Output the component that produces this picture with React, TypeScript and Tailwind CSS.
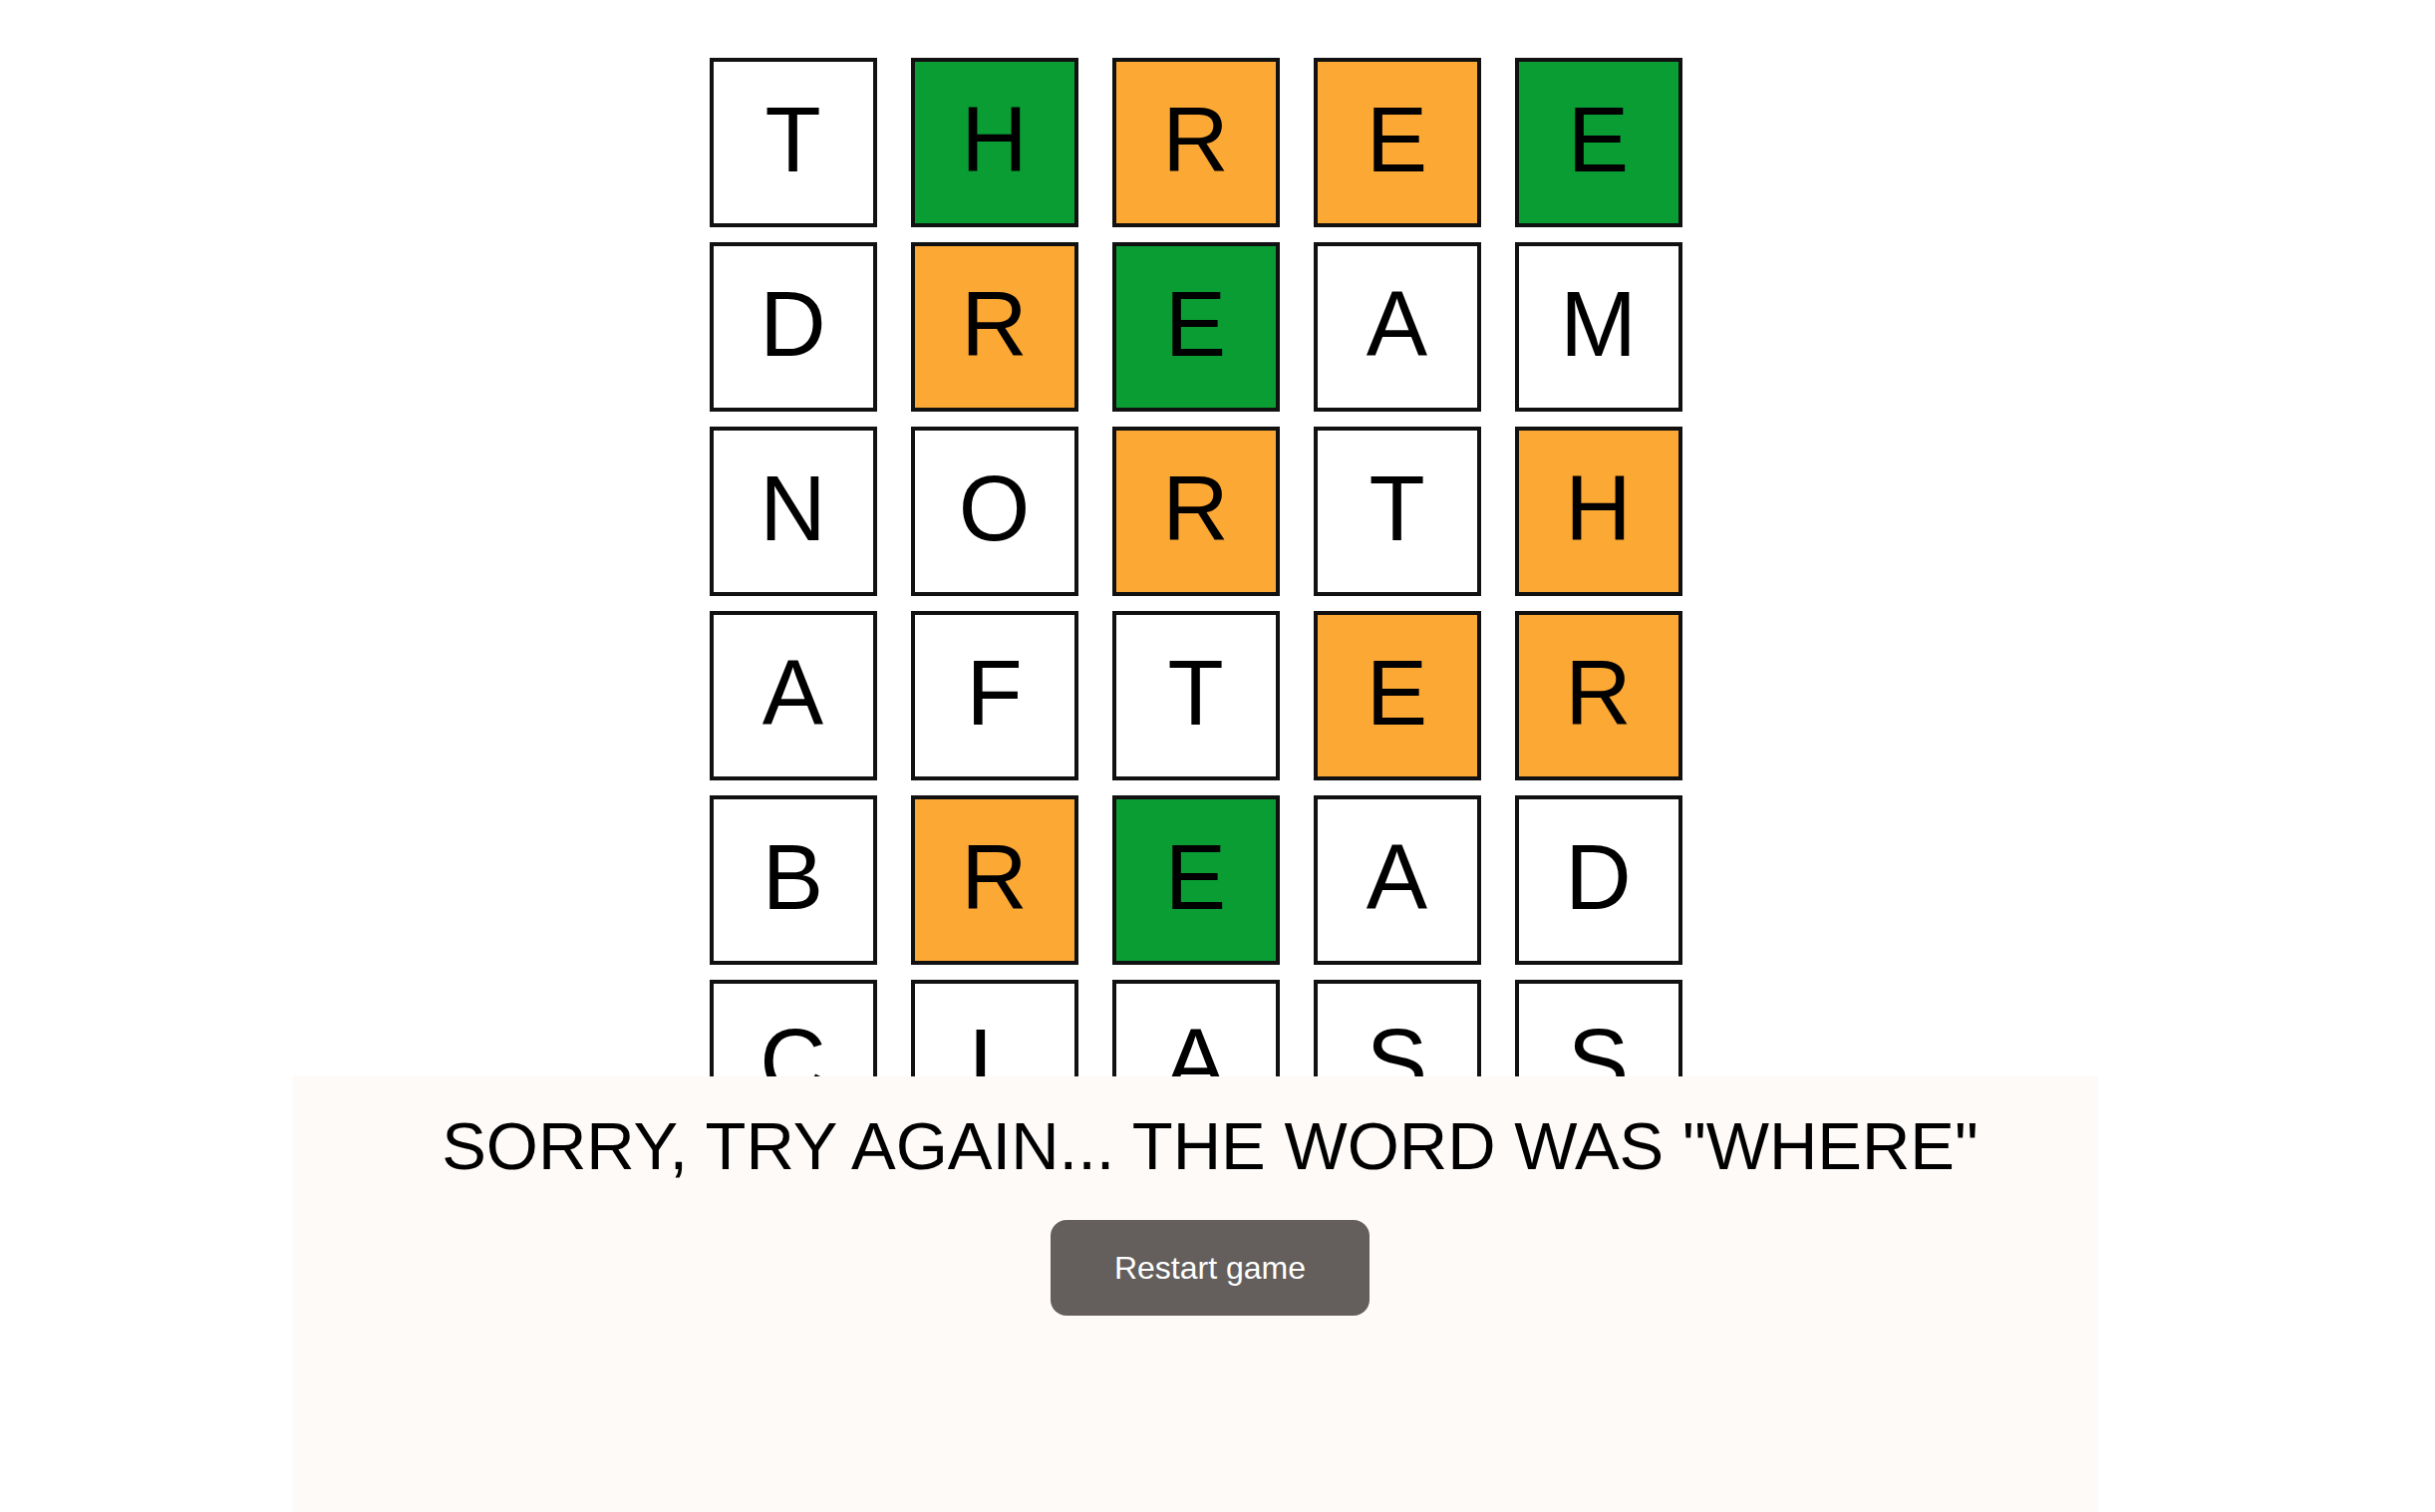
import React from 'react';

type Mark = 'hit' | 'near' | 'miss';

const guesses: { word: string; marks: Mark[] }[] = [
  { word: 'THREE', marks: ['miss', 'hit', 'near', 'near', 'hit'] },
  { word: 'DREAM', marks: ['miss', 'near', 'hit', 'miss', 'miss'] },
  { word: 'NORTH', marks: ['miss', 'miss', 'near', 'miss', 'near'] },
  { word: 'AFTER', marks: ['miss', 'miss', 'miss', 'near', 'near'] },
  { word: 'BREAD', marks: ['miss', 'near', 'hit', 'miss', 'miss'] },
  { word: 'CLASS', marks: ['miss', 'miss', 'miss', 'miss', 'miss'] },
];

const tileColor: Record<Mark, string> = {
  hit: 'bg-[#099d34]',
  near: 'bg-[#fca834]',
  miss: 'bg-white',
};

function Tile({ letter, mark }: { letter: string; mark: Mark }) {
  return (
    <div
      className={`w-[168px] h-[170px] border-4 border-[#111] flex items-center justify-center pb-[6px] text-[92px] text-black ${tileColor[mark]}`}
    >
      {letter}
    </div>
  );
}

export default function App() {
  return (
    <div
      className="relative min-h-screen bg-white pr-[44px]"
      style={{ fontFamily: '"Liberation Sans", Arial, sans-serif' }}
    >
      <div className="flex justify-center pt-[58px]">
        <div className="grid grid-cols-5 gap-x-[34px] gap-y-[15px]">
          {guesses.map((g, r) =>
            g.word
              .split('')
              .map((ch, c) => <Tile key={`${r}-${c}`} letter={ch} mark={g.marks[c]} />)
          )}
        </div>
      </div>

      {/* end-of-game panel pinned to the bottom */}
      <div className="fixed inset-x-0 bottom-0 pr-[44px] flex justify-center">
        <div className="w-[1811px] h-[437px] bg-[#fdfaf8] flex flex-col items-center pt-[20px] pl-[29px]">
          <h2 className="text-[67px] leading-normal text-black">
            SORRY, TRY AGAIN... THE WORD WAS "WHERE"
          </h2>
          <button className="mt-[23px] w-[320px] h-[96px] rounded-[16px] bg-[#645f5c] text-white text-[32px]">
            Restart game
          </button>
        </div>
      </div>
    </div>
  );
}
